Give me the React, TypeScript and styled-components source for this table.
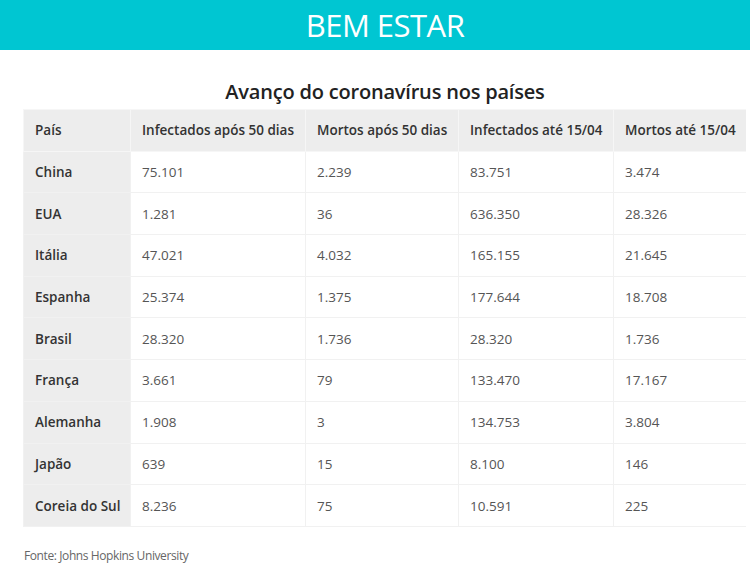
import styled, { createGlobalStyle } from "styled-components";

const GlobalStyle = createGlobalStyle`
  html, body {
    margin: 0;
    padding: 0;
    background: #fff;
    font-family: "Open Sans", "Liberation Sans", sans-serif;
  }
`;

const Page = styled.main`
  width: 750px;
  height: 575px;
  display: flex;
  flex-direction: column;
`;

const Banner = styled.header`
  height: 50px;
  background: #00c6d2;
  color: #fff;
  display: flex;
  align-items: center;
  justify-content: center;
  padding-left: 20px;
  font-size: 31px;
  font-weight: 400;
  letter-spacing: -0.5px;
`;

const Title = styled.h1`
  margin: 28px 0 0;
  text-align: center;
  font-size: 20px;
  font-weight: 600;
  color: #222;
  line-height: 28px;
  letter-spacing: -0.2px;
  padding-left: 20px;
`;

const Table = styled.table`
  margin: 3px 0 0 23px;
  width: 722px;
  border-collapse: collapse;
  table-layout: fixed;
  font-size: 13.5px;
`;

const Cell = styled.td<{ $head?: boolean }>`
  height: 41.7px;
  box-sizing: border-box;
  padding: 0 0 0 11px;
  border: 1px solid #f1f1f1;
  background: ${(p) => (p.$head ? "#ededed" : "#fff")};
  color: ${(p) => (p.$head ? "#333" : "#555")};
  font-weight: ${(p) => (p.$head ? 600 : 400)};
  white-space: nowrap;
  text-align: left;
  &:last-child {
    border-right: none;
  }
`;

const HeadRow = styled.tr`
  & > td {
    border-color: #f6f6f6;
  }
`;

const Source = styled.p`
  margin: 20px 0 0 24px;
  font-size: 12px;
  color: #666;
  letter-spacing: -0.4px;
`;

const columns = [
  { label: "País", width: 107 },
  { label: "Infectados após 50 dias", width: 175 },
  { label: "Mortos após 50 dias", width: 153 },
  { label: "Infectados até 15/04", width: 155 },
  { label: "Mortos até 15/04", width: 132 },
];

const rows = [
  ["China", "75.101", "2.239", "83.751", "3.474"],
  ["EUA", "1.281", "36", "636.350", "28.326"],
  ["Itália", "47.021", "4.032", "165.155", "21.645"],
  ["Espanha", "25.374", "1.375", "177.644", "18.708"],
  ["Brasil", "28.320", "1.736", "28.320", "1.736"],
  ["França", "3.661", "79", "133.470", "17.167"],
  ["Alemanha", "1.908", "3", "134.753", "3.804"],
  ["Japão", "639", "15", "8.100", "146"],
  ["Coreia do Sul", "8.236", "75", "10.591", "225"],
];

function App() {
  return (
    <Page>
      <GlobalStyle />
      <Banner>BEM ESTAR</Banner>
      <Title>Avanço do coronavírus nos países</Title>
      <Table>
        <colgroup>
          {columns.map((c) => (
            <col key={c.label} style={{ width: c.width }} />
          ))}
        </colgroup>
        <tbody>
          <HeadRow>
            {columns.map((c) => (
              <Cell key={c.label} $head>
                {c.label}
              </Cell>
            ))}
          </HeadRow>
          {rows.map((r) => (
            <tr key={r[0]}>
              {r.map((v, i) => (
                <Cell key={i} $head={i === 0}>
                  {v}
                </Cell>
              ))}
            </tr>
          ))}
        </tbody>
      </Table>
      <Source>Fonte: Johns Hopkins University</Source>
    </Page>
  );
}

export default App;
